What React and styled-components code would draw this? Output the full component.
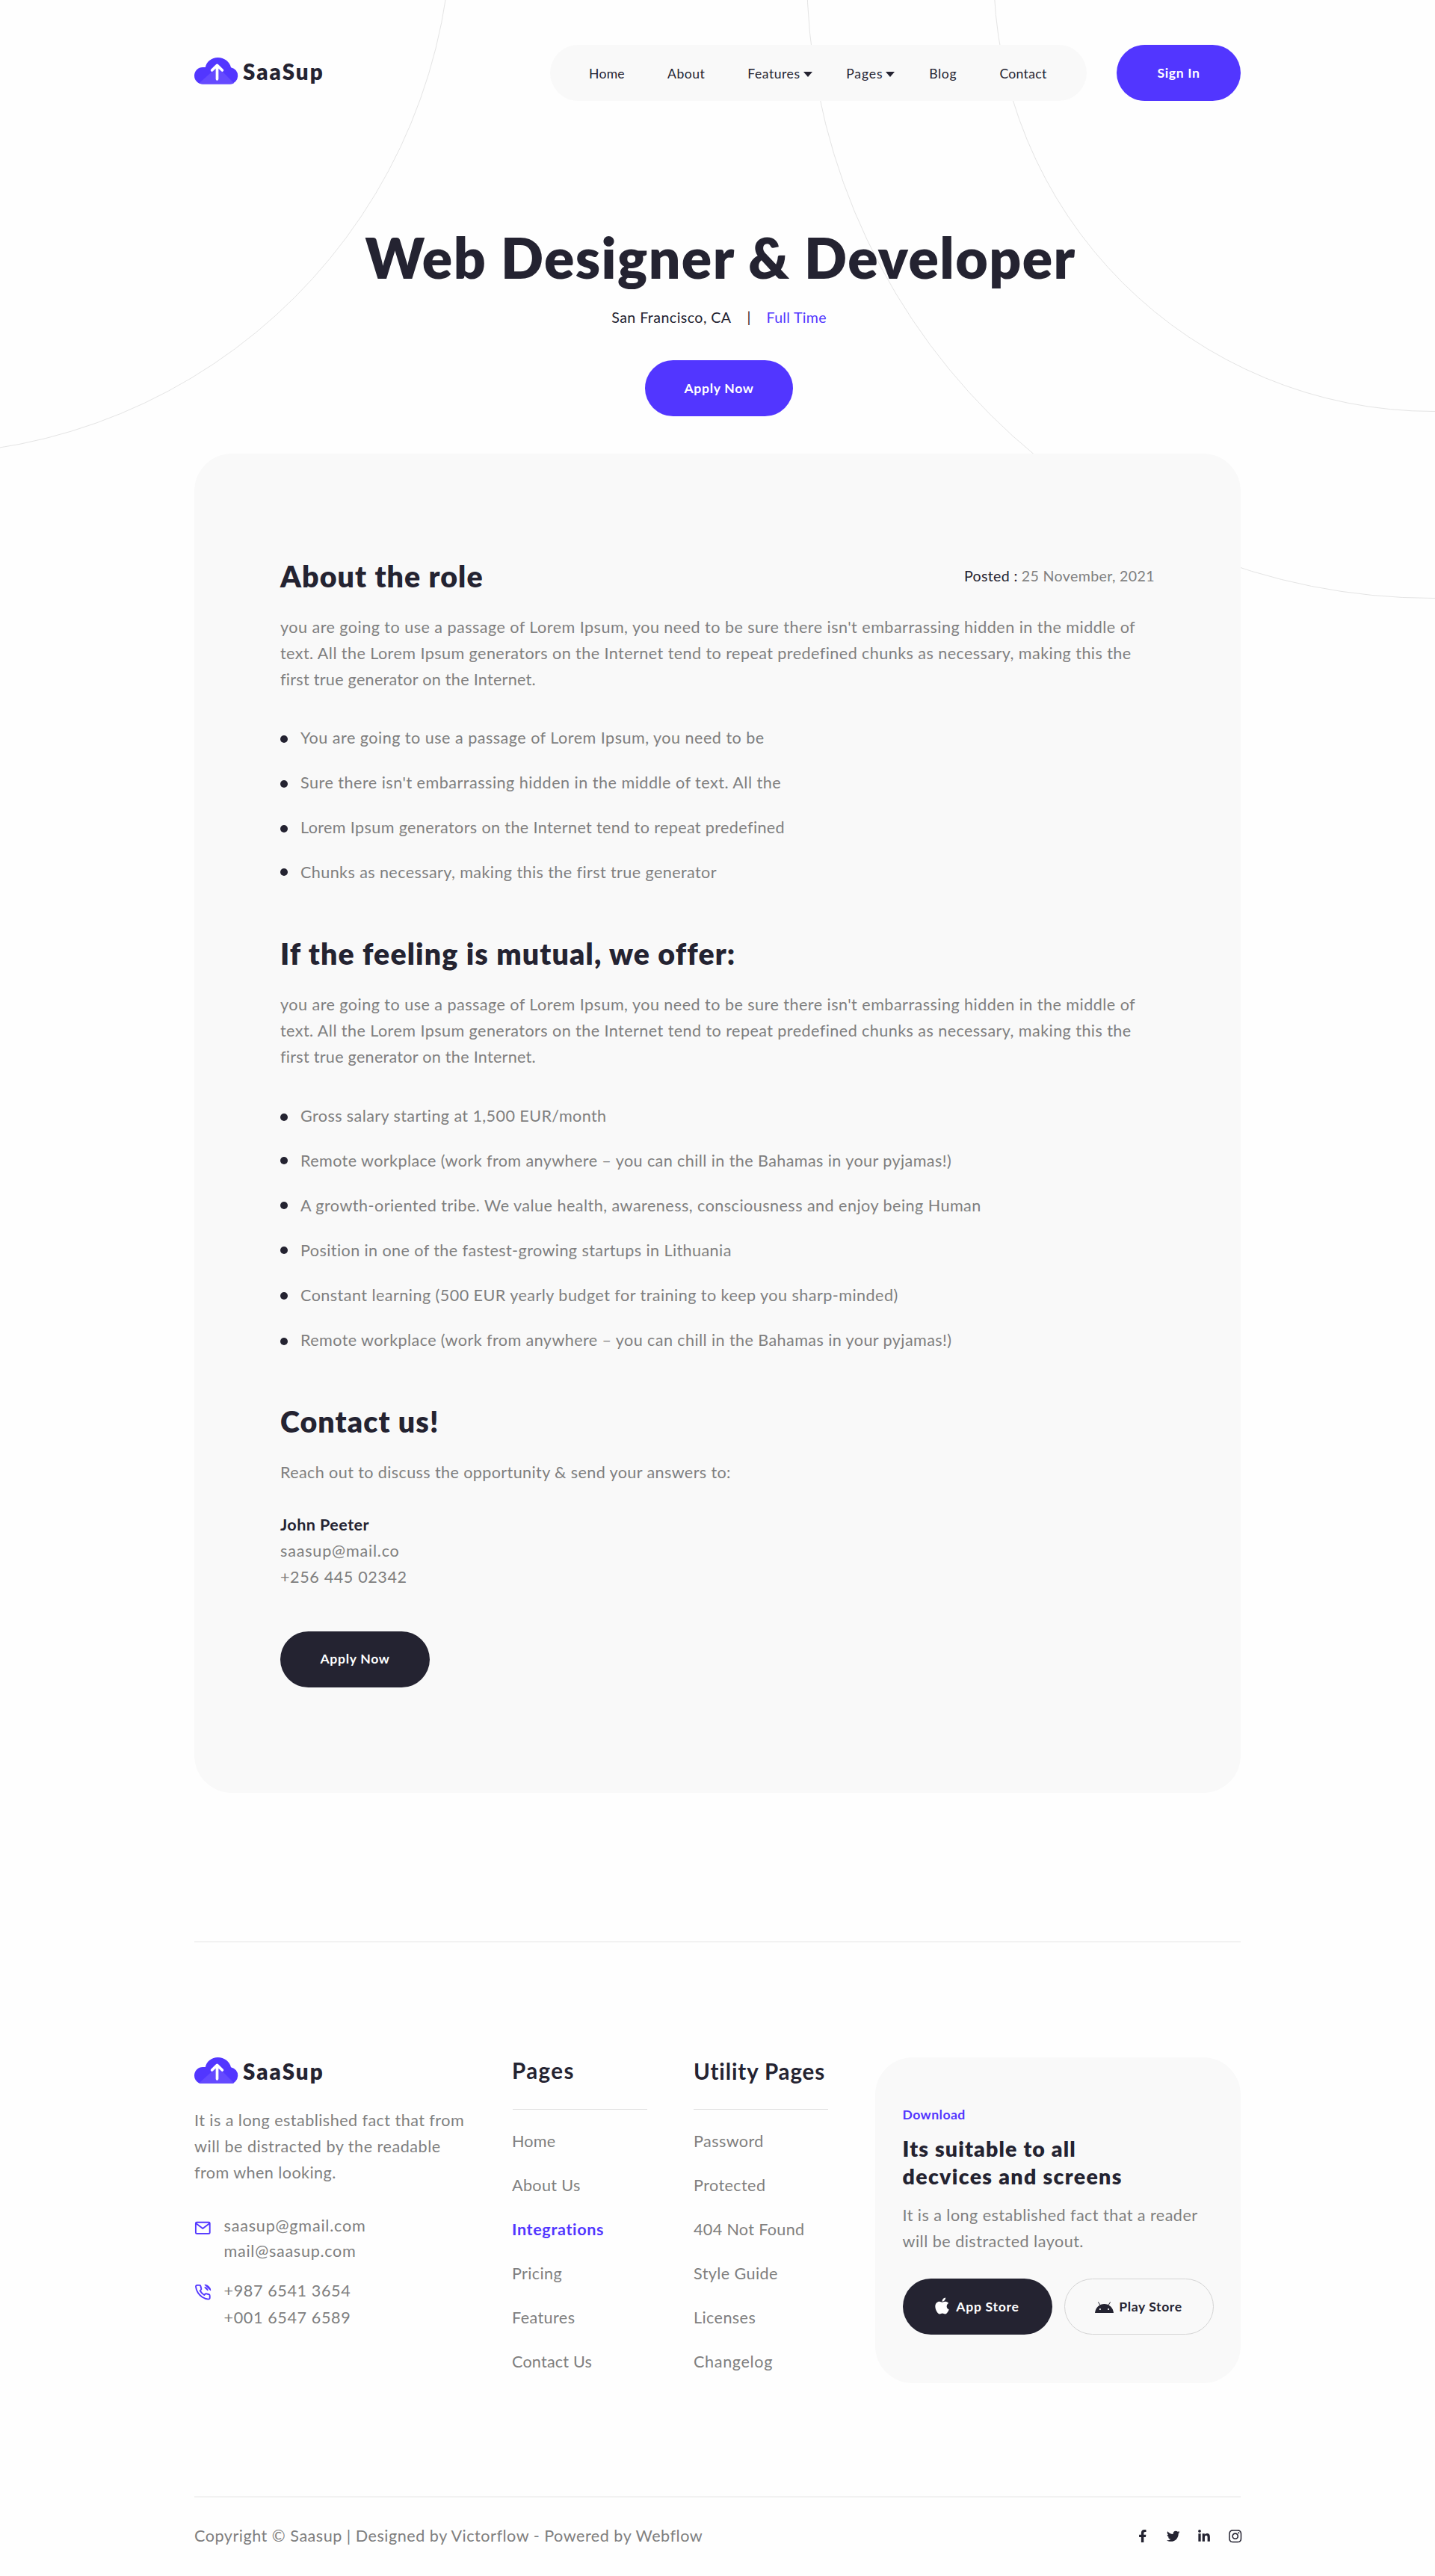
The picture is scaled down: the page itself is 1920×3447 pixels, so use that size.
import React from 'react';
import styled, { createGlobalStyle } from 'styled-components';
import { FaApple, FaFacebookF, FaTwitter, FaLinkedinIn, FaInstagram } from 'react-icons/fa';

const violet = '#5236ff';
const ink = '#242331';
const grey = '#7f7f7f';
const panel = '#f9f9f9';

const GlobalStyle = createGlobalStyle`
  *, *::before, *::after { box-sizing: border-box; }
  body {
    margin: 0;
    background: #fefefe;
    color: ${ink};
    font-family: Lato, "Open Sans", sans-serif;
  }
  h1, h2, h3, p, ul { margin: 0; padding: 0; }
  ul { list-style: none; }
  a { color: inherit; text-decoration: none; }
`;

const Page = styled.div`
  position: relative;
  width: 1920px;
  height: 3447px;
  overflow: hidden;
`;

const Backdrop = styled.svg`
  position: absolute;
  top: 0;
  left: 0;
  fill: none;
  stroke: #e4e4e4;
`;

const Container = styled.div`
  position: relative;
  width: 1400px;
  margin: 0 auto;
`;

const Text = styled.span`
  white-space: nowrap;
  letter-spacing: ${p => p.$ls || 0}px;
`;

const Line = styled(Text)`
  display: block;
`;

/* header */

const Header = styled.header`
  display: flex;
  align-items: center;
  height: 135px;
  padding-top: 60px;
`;

const LogoLink = styled.a`
  display: flex;
  align-items: center;
  gap: 6px;
  height: 35px;
  margin-bottom: ${p => p.$lift || 0}px;
  font-size: 29.5px;
  font-weight: 800;
  line-height: 36px;
`;

const LogoText = styled(Text)`
  padding-top: 2px;
`;

const Nav = styled.nav`
  display: flex;
  align-items: center;
  gap: 57.2px;
  width: 718px;
  height: 75px;
  margin-left: auto;
  padding: 1px 0 0 52.5px;
  border-radius: 38px;
  background: ${panel};
  font-size: 17.6px;
  font-weight: 400;
  line-height: 21px;
`;

const NavItem = styled.a`
  display: flex;
  align-items: center;
  white-space: nowrap;
`;

const Caret = styled.span`
  width: 0;
  margin: 2px -11.5px 0 4px;
  border: 6px solid transparent;
  border-top: 7px solid ${ink};
  border-bottom: 0;
`;

const Button = styled.a`
  display: flex;
  align-items: center;
  justify-content: center;
  gap: 7px;
  width: ${p => p.$w}px;
  height: 75px;
  padding-bottom: ${p => (p.$lift ? 1 : 0)}px;
  border: 1px solid ${p => (p.$kind === 'outline' ? '#d4d4d4' : 'transparent')};
  border-radius: 38px;
  background: ${p => ({ dark: ink, outline: 'transparent' })[p.$kind] || violet};
  background-clip: border-box;
  background-origin: border-box;
  color: ${p => (p.$kind === 'outline' ? ink : '#fff')};
  font-size: 17.6px;
  font-weight: 700;
  line-height: 21px;
`;

const SignIn = styled(Button)`
  margin-left: 40.5px;
`;

/* hero */

const Hero = styled.section`
  display: flex;
  flex-direction: column;
  align-items: center;
  height: 472px;
  padding: 164px 0 0 4px;
`;

const Title = styled.h1`
  padding-left: 4px;
  font-size: 75px;
  font-weight: 800;
  line-height: 90px;
  white-space: nowrap;
  letter-spacing: 1.42px;
`;

const Meta = styled.div`
  display: flex;
  gap: 21px;
  margin: 21px 0 42px;
  font-size: 19.6px;
  line-height: 30px;
`;

const Accent = styled(Text)`
  color: ${violet};
`;

/* role card */

const Card = styled.main`
  height: 1792px;
  padding: 139px 115px 0;
  border-radius: 50px;
  background: ${panel};
`;

const HeadRow = styled.div`
  display: flex;
  align-items: flex-start;
  justify-content: space-between;
`;

const Heading = styled.h2`
  margin: ${p => p.$top || 0}px 0 27px 0;
  font-size: 39.3px;
  font-weight: 800;
  line-height: 49px;
  white-space: nowrap;
  letter-spacing: ${p => p.$ls}px;
`;

const Posted = styled.div`
  display: flex;
  gap: 5px;
  margin-top: 9px;
  color: ${grey};
  font-size: 19.6px;
  line-height: 31px;
`;

const Dark = styled(Text)`
  color: ${ink};
`;

const Paragraph = styled.p`
  color: ${grey};
  font-size: 21.6px;
  line-height: 35px;
`;

const Bullets = styled.ul`
  display: flex;
  flex-direction: column;
  gap: 23.9px;
  margin-top: ${p => p.$top}px;
`;

const Bullet = styled.li`
  display: flex;
  align-items: center;
  gap: 17px;
  color: ${grey};
  font-size: 21.6px;
  line-height: 36px;
`;

const Dot = styled.span`
  width: 10px;
  height: 10px;
  margin-top: ${p => p.$drop * 2}px;
  border-radius: 50%;
  background: ${ink};
`;

const Person = styled(Paragraph)`
  margin: 35px 0 54.5px;
`;

const Name = styled(Line)`
  color: ${ink};
  font-weight: 700;
`;

/* footer */

const Footer = styled.footer`
  margin-top: 199px;
  border-top: 1px solid #e3e3e3;
  padding-top: 154px;
`;

const Columns = styled.div`
  display: grid;
  grid-template-columns: 425px 243px 242.5px 489.5px;
`;

const About = styled(Paragraph)`
  margin: 32px 0 37px;
`;

const Contact = styled.div`
  display: flex;
  gap: ${p => p.$gap}px;
  margin-bottom: 17.5px;
  color: ${grey};
  font-size: 21.6px;
  line-height: ${p => p.$lh}px;
`;

const LineIcon = styled.svg`
  flex: none;
  width: 22.6px;
  height: 22.6px;
  margin-top: ${p => p.$top}px;
  fill: none;
  stroke: ${violet};
  stroke-width: 2;
  stroke-linecap: round;
  stroke-linejoin: round;
`;

const LinkColumn = styled.div`
  padding-top: ${p => p.$top || 0}px;
`;

const ColumnTitle = styled.h3`
  font-size: 29.5px;
  font-weight: 700;
  line-height: 36px;
`;

const Rule = styled.div`
  width: 180px;
  height: 1px;
  margin: ${p => p.$top}px 0 24px ${p => p.$left}px;
  background: #dfdfdf;
`;

const Links = styled.ul`
  display: flex;
  flex-direction: column;
  gap: 23px;
  color: ${grey};
  font-size: 21.6px;
  line-height: 36px;
`;

const FooterLink = styled.li`
  color: ${p => (p.$active ? violet : 'inherit')};
  font-weight: ${p => (p.$active ? 700 : 400)};
`;

const Download = styled.aside`
  height: 436px;
  padding: 65px 36px 0 37px;
  border-radius: 50px;
  background: ${panel};
`;

const Eyebrow = styled.p`
  color: ${violet};
  font-size: 17.6px;
  font-weight: 700;
  line-height: 24px;
`;

const DownloadTitle = styled.h3`
  margin: 15px 0 16px;
  font-size: 28.5px;
  font-weight: 800;
  line-height: 37px;
`;

const Stores = styled.div`
  display: flex;
  gap: 16px;
  margin-top: 32px;
`;

const Apple = styled(FaApple)`
  width: 19px;
  height: 25px;
  margin: 0 2px 3px 0;
`;

const Android = styled.svg`
  width: 25px;
  height: 15px;
  margin-top: 1px;
  fill: ${ink};
  stroke: ${ink};
`;

const Bottom = styled.div`
  display: flex;
  justify-content: space-between;
  margin-top: 151px;
  padding-top: 33px;
  border-top: 2px solid #f2f2f2;
  color: ${grey};
  font-size: 21.6px;
  line-height: 36px;
`;

const Socials = styled.div`
  display: grid;
  grid-template-columns: repeat(4, 20px);
  gap: 21.2px;
  place-items: center;
  margin-right: -2.5px;
  padding-top: 1px;
  color: ${ink};
`;

function Logo({ lift }) {
  return (
    <LogoLink $lift={lift}>
      <svg width="59" height="35.5" viewBox="0 0 59 35.5">
        <path
          fill={violet}
          d="M11.3 35.5A11.3 11.3 0 0 1 11.3 12.9H14.8C16.4 5.5 23 0 31.5 0S47.5 5.5 49 13.3A11.2 11.2 0 0 1 47.8 35.5Z"
        />
        <path fill="#654aff" d="M6.5 34.2L28.5 14.5Q31 12.4 33.5 14.5L53 34.2Q50.8 35.5 47.8 35.5H11.3Q8.6 35.5 6.5 34.2Z" />
        <path
          d="M30.5 28.8V10.8M23.6 17L30.5 10.4L37.4 17"
          fill="none"
          stroke="#fff"
          strokeWidth="3.7"
          strokeLinecap="round"
          strokeLinejoin="round"
        />
      </svg>
      <LogoText $ls={2.05}>SaaSup</LogoText>
    </LogoLink>
  );
}

const navItems = [
  ['Home', 0.25],
  ['About', 0.45],
  ['Features', 0.5, true],
  ['Pages', 0.86, true],
  ['Blog', 0.66],
  ['Contact', 0.3],
];

const passage = [
  ["you are going to use a passage of Lorem Ipsum, you need to be sure there isn't embarrassing hidden in the middle of", 0.452],
  ['text. All the Lorem Ipsum generators on the Internet tend to repeat predefined chunks as necessary, making this the', 0.42],
  ['first true generator on the Internet.', 0.261],
];

const roleItems = [
  ['You are going to use a passage of Lorem Ipsum, you need to be', 0.47, 2],
  ["Sure there isn't embarrassing hidden in the middle of text. All the", 0.48, 2],
  ['Lorem Ipsum generators on the Internet tend to repeat predefined', 0.36, 2],
  ['Chunks as necessary, making this the first true generator', 0.39, 0],
];

const offerItems = [
  ['Gross salary starting at 1,500 EUR/month', 0.39, 2],
  ['Remote workplace (work from anywhere – you can chill in the Bahamas in your pyjamas!)', 0.395, 0],
  ['A growth-oriented tribe. We value health, awareness, consciousness and enjoy being Human', 0.45, 0],
  ['Position in one of the fastest-growing startups in Lithuania', 0.4, 0],
  ['Constant learning (500 EUR yearly budget for training to keep you sharp-minded)', 0.44, 1],
  ['Remote workplace (work from anywhere – you can chill in the Bahamas in your pyjamas!)', 0.4, 2],
];

const pageLinks = [
  ['Home', 0.2],
  ['About Us', 0.35],
  ['Integrations', 0.65, true],
  ['Pricing', 0.35],
  ['Features', 0.4],
  ['Contact Us', 0.2],
];

const utilityLinks = [
  ['Password', 0.4],
  ['Protected', 0.4],
  ['404 Not Found', 0.32],
  ['Style Guide', 0.4],
  ['Licenses', 0.4],
  ['Changelog', 0.65],
];

const Passage = () => (
  <Paragraph>
    {passage.map(([text, ls]) => (
      <Line key={text} $ls={ls}>{text}</Line>
    ))}
  </Paragraph>
);

const BulletList = ({ items, top }) => (
  <Bullets $top={top}>
    {items.map(([text, ls, drop], i) => (
      <Bullet key={i}>
        <Dot $drop={drop} />
        <Text $ls={ls}>{text}</Text>
      </Bullet>
    ))}
  </Bullets>
);

const LinkList = ({ items }) => (
  <Links>
    {items.map(([text, ls, active]) => (
      <FooterLink key={text} $active={active}>
        <Line $ls={ls}>{text}</Line>
      </FooterLink>
    ))}
  </Links>
);

export default function App() {
  return (
    <Page>
      <GlobalStyle />
      <Backdrop width="1920" height="1000">
        <circle cx="-113" cy="-109.5" r="717.5" />
        <circle cx="1918" cy="-38" r="838.5" />
        <circle cx="1918" cy="-38" r="588.5" />
      </Backdrop>
      <Container>
        <Header>
          <Logo lift={5} />
          <Nav>
            {navItems.map(([label, ls, menu]) => (
              <NavItem key={label}>
                <Text $ls={ls}>{label}</Text>
                {menu && <Caret />}
              </NavItem>
            ))}
          </Nav>
          <SignIn $w={166} $lift>
            <Text $ls={0.64}>Sign In</Text>
          </SignIn>
        </Header>

        <Hero>
          <Title>Web Designer &amp; Developer</Title>
          <Meta>
            <Text $ls={0.45}>San Francisco, CA</Text>
            <span>|</span>
            <Accent $ls={0.3}>Full Time</Accent>
          </Meta>
          <Button $w={198}>
            <Text $ls={0.69}>Apply Now</Text>
          </Button>
        </Hero>

        <Card>
          <HeadRow>
            <Heading $ls={1.08}>About the role</Heading>
            <Posted>
              <Dark $ls={0.35}>Posted :</Dark>
              <Text $ls={0.36}>25 November, 2021</Text>
            </Posted>
          </HeadRow>
          <Passage />
          <BulletList items={roleItems} top={42} />

          <Heading $top={66.5} $ls={1.14}>If the feeling is mutual, we offer:</Heading>
          <Passage />
          <BulletList items={offerItems} top={43} />

          <Heading $top={66.5} $ls={1.1}>Contact us!</Heading>
          <Paragraph>
            <Line $ls={0.375}>Reach out to discuss the opportunity &amp; send your answers to:</Line>
          </Paragraph>
          <Person as="div">
            <Name $ls={0.43}>John Peeter</Name>
            <Line $ls={0.79}>saasup@mail.co</Line>
            <Line $ls={0.6}>+256 445 02342</Line>
          </Person>
          <Button $w={200} $kind="dark" $lift>
            <Text $ls={0.69}>Apply Now</Text>
          </Button>
        </Card>

        <Footer>
          <Columns>
            <div>
              <Logo />
              <About>
                <Line $ls={0.44}>It is a long established fact that from</Line>
                <Line $ls={0.51}>will be distracted by the readable</Line>
                <Line $ls={0.42}>from when looking.</Line>
              </About>
              <Contact $lh={33.5} $gap={17}>
                <LineIcon viewBox="0 0 24 24" $top={8}>
                  <rect x="2" y="4" width="20" height="16" rx="1.5" />
                  <path d="M2.5 5.5L12 12.8L21.5 5.5" />
                </LineIcon>
                <div>
                  <Line $ls={0.77}>saasup@gmail.com</Line>
                  <Line $ls={0.7}>mail@saasup.com</Line>
                </div>
              </Contact>
              <Contact $lh={36} $gap={17}>
                <LineIcon viewBox="0 0 24 24" $top={9}>
                  <path d="M22 16.92v3a2 2 0 0 1-2.18 2 19.79 19.79 0 0 1-8.63-3.07 19.5 19.5 0 0 1-6-6 19.79 19.79 0 0 1-3.07-8.67A2 2 0 0 1 4.11 2h3a2 2 0 0 1 2 1.72 12.84 12.84 0 0 0 .7 2.81 2 2 0 0 1-.45 2.11L8.09 9.91a16 16 0 0 0 6 6l1.27-1.27a2 2 0 0 1 2.11-.45 12.84 12.84 0 0 0 2.81.7A2 2 0 0 1 22 16.92z" />
                  <path fill={violet} strokeWidth="1.6" d="M15.05 5.2A5 5 0 0 1 19 9.1Z" />
                  <path fill={violet} strokeWidth="1.2" d="M15.05 1.5A8.6 8.6 0 0 1 23 9.1Z" />
                </LineIcon>
                <div>
                  <Line $ls={0.6}>+987 6541 3654</Line>
                  <Line $ls={0.6}>+001 6547 6589</Line>
                </div>
              </Contact>
            </div>

            <LinkColumn>
              <ColumnTitle><Line $ls={1.4}>Pages</Line></ColumnTitle>
              <Rule $top={33} $left={1} />
              <LinkList items={pageLinks} />
            </LinkColumn>

            <LinkColumn $top={1}>
              <ColumnTitle><Line $ls={0.88}>Utility Pages</Line></ColumnTitle>
              <Rule $top={32} $left={0} />
              <LinkList items={utilityLinks} />
            </LinkColumn>

            <Download>
              <Eyebrow><Line $ls={0.45}>Download</Line></Eyebrow>
              <DownloadTitle>
                <Line $ls={1.17}>Its suitable to all</Line>
                <Line $ls={1.33}>decvices and screens</Line>
              </DownloadTitle>
              <Paragraph>
                <Line $ls={0.44}>It is a long established fact that a reader</Line>
                <Line $ls={0.47}>will be distracted layout.</Line>
              </Paragraph>
              <Stores>
                <Button $w={200} $kind="dark">
                  <Apple />
                  <Text $ls={0.7}>App Store</Text>
                </Button>
                <Button $w={200} $kind="outline">
                  <Android viewBox="0 0 25 15">
                    <path stroke="none" d="M0 15C.7 7.8 6 3 12.5 3S24.3 7.8 25 15Z" />
                    <path d="M4.4.4L7.2 5M20.6.4L17.8 5" />
                    <circle cx="6.9" cy="10" r="1.1" fill="#fff" stroke="none" />
                    <circle cx="18.1" cy="10" r="1.1" fill="#fff" stroke="none" />
                  </Android>
                  <Text $ls={0.59}>Play Store</Text>
                </Button>
              </Stores>
            </Download>
          </Columns>

          <Bottom>
            <Text $ls={0.5}>Copyright © Saasup | Designed by Victorflow - Powered by Webflow</Text>
            <Socials>
              <FaFacebookF size={17.6} />
              <FaTwitter size={17.5} />
              <FaLinkedinIn size={18} />
              <FaInstagram size={19.5} />
            </Socials>
          </Bottom>
        </Footer>
      </Container>
    </Page>
  );
}
